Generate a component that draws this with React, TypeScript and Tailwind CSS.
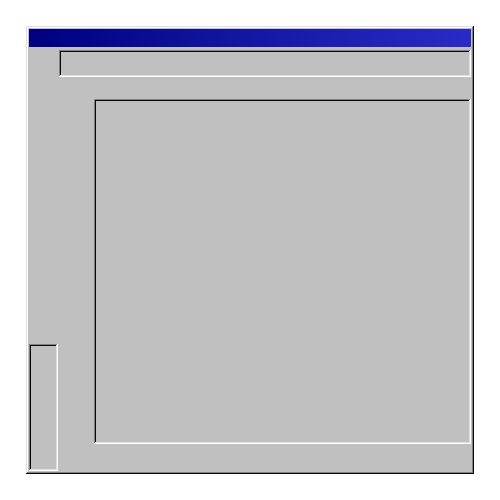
const raised =
  "shadow-[inset_-1px_-1px_#0a0a0a,inset_1px_1px_#dfdfdf,inset_-2px_-2px_#808080,inset_2px_2px_#ffffff]";
const sunken =
  "shadow-[inset_-1px_-1px_#ffffff,inset_1px_1px_#808080,inset_-2px_-2px_#dfdfdf,inset_2px_2px_#0a0a0a]";

function Panel({ className }: { className: string }) {
  return <div className={`bg-[#c0c0c0] ${sunken} ${className}`} />;
}

export default function App() {
  return (
    <div className="w-[500px] h-[500px] bg-white flex items-center justify-center">
      <div className={`w-[448px] h-[448px] bg-[#c0c0c0] p-[3px] flex flex-col ${raised}`}>
        {/* title bar */}
        <div className="h-[18px] bg-gradient-to-r from-[#000080] to-[#2a2ac6]" />
        {/* top panel */}
        <div className="mt-[3px] ml-[30px] h-[27px]">
          <Panel className="h-full" />
        </div>
        {/* body */}
        <div className="flex flex-1 min-h-0">
          <div className="w-[29px] flex flex-col justify-end">
            <Panel className="h-[127px]" />
          </div>
          <div className="flex-1 pl-[36px] pt-[22px] pb-[27px]">
            <Panel className="h-full" />
          </div>
        </div>
      </div>
    </div>
  );
}
